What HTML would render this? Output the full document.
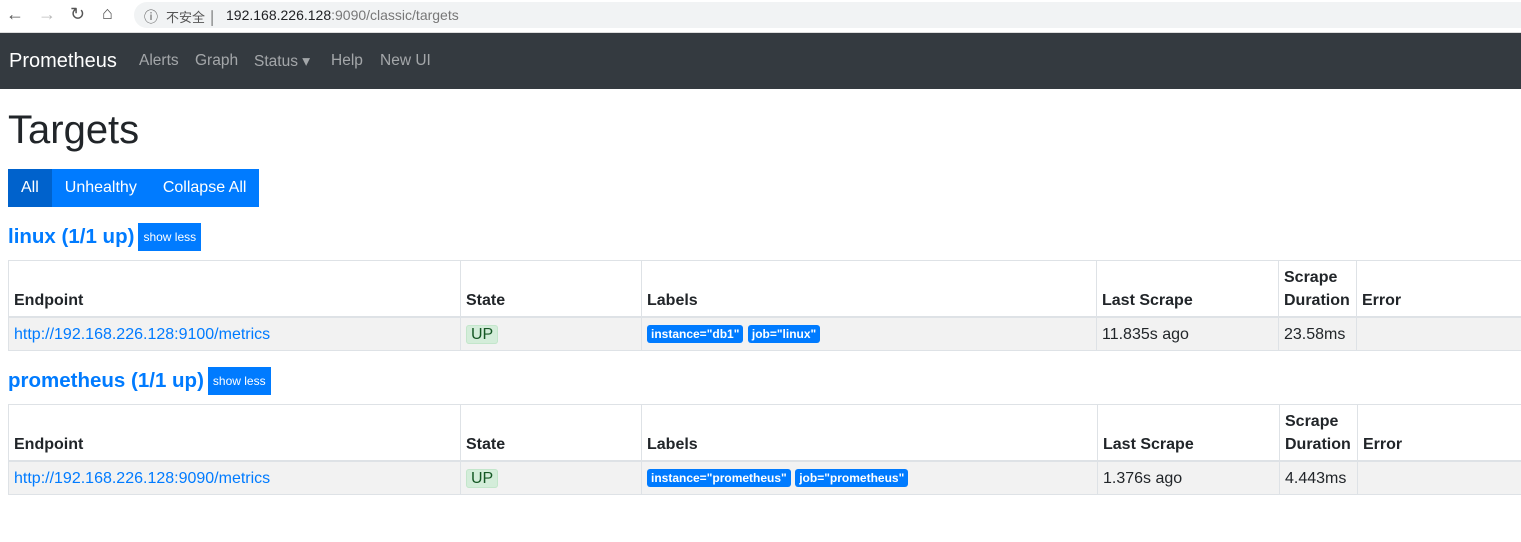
<!DOCTYPE html><html><head><meta charset="utf-8"><style>
body{margin:0;width:1521px;height:542px;overflow:hidden;background:#fff;font-family:"Liberation Sans","Noto Sans CJK SC",sans-serif;color:#212529}
.chrome{height:32px;background:#fff;border-bottom:1px solid #ddd;position:relative}
.url{position:absolute;left:134px;top:2px;width:1400px;height:26px;background:#f1f3f4;border-radius:14px}
.url span{position:absolute;top:5px;font-size:14px}
nav{position:absolute;top:33px;left:0;width:1521px;height:56px;background:#343a40}
nav .b{position:absolute;left:9px;top:17px;color:#fff;font-size:20px}
nav a{position:absolute;top:19px;color:rgba(255,255,255,.55);font-size:15.5px}
h1{position:absolute;left:8px;top:108px;margin:0;font-size:40px;font-weight:500}
.btns{position:absolute;left:8px;top:169px;height:38px;display:flex}
.btns div{background:#007bff;color:#fff;font-size:16px;line-height:38px;padding:0 13px}
.btns div.a{background:#0062cc}
h2{position:absolute;left:8px;margin:0;font-size:20.5px;font-weight:bold;color:#007bff;line-height:28px}
h2 span{display:inline-block;background:#007bff;color:#fff;font-size:12px;font-weight:normal;padding:0 5px;line-height:28px;vertical-align:top;margin-left:4px}
table{position:absolute;left:8px;width:1530px;border-collapse:collapse;font-size:16px;line-height:23px}
td,th{border:1px solid #dee2e6;padding:0 5px;text-align:left;vertical-align:bottom}
th{height:51px;padding-bottom:4px;border-bottom:2px solid #dee2e6}
tr.d td{background:#f2f2f2;height:32px;vertical-align:middle}
.l{color:#007bff}
.up{background:#d4edda;color:#155724;border:1px solid #c3e6cb;padding:0 4px;border-radius:3px}
.lb{background:#007bff;color:#fff;font-size:12px;font-weight:bold;padding:2px 4px;border-radius:3px;margin-right:0}
</style></head><body>
<div class="chrome"><span style="position:absolute;left:6px;top:4px;font-size:18px;color:#555">←</span><span style="position:absolute;left:38px;top:4px;font-size:18px;color:#bbb">→</span><span style="position:absolute;left:70px;top:4px;font-size:18px;color:#555">↻</span><span style="position:absolute;left:102px;top:3px;font-size:18px;color:#555">⌂</span>
<div class="url"><span style="left:10px;color:#555">ⓘ</span><span style="left:32px;color:#555;font-size:13px">不安全 │</span><span style="left:92px;color:#202124">192.168.226.128<span style="position:static;color:#777">:9090/classic/targets</span></span></div></div>
<nav><span class="b">Prometheus</span><a style="left:139px">Alerts</a><a style="left:195px">Graph</a><a style="left:254px">Status ▾</a><a style="left:331px">Help</a><a style="left:380px">New UI</a></nav>
<h1>Targets</h1>
<div class="btns"><div class="a">All</div><div>Unhealthy</div><div>Collapse All</div></div>
<h2 style="top:223px">linux (1/1 up)<span>show less</span></h2>
<table style="top:260px"><tr><th style="width:441px">Endpoint</th><th style="width:170px">State</th><th style="width:444px">Labels</th><th style="width:171px">Last Scrape</th><th style="width:67px">Scrape Duration</th><th>Error</th></tr>
<tr class="d"><td class="l">http://192.168.226.128:9100/metrics</td><td><span class="up">UP</span></td><td><span class="lb">instance="db1"</span> <span class="lb">job="linux"</span></td><td>11.835s ago</td><td>23.58ms</td><td></td></tr></table>
<h2 style="top:367px">prometheus (1/1 up)<span>show less</span></h2>
<table style="top:404px"><tr><th style="width:441px">Endpoint</th><th style="width:170px">State</th><th style="width:445px">Labels</th><th style="width:171px">Last Scrape</th><th style="width:67px">Scrape Duration</th><th>Error</th></tr>
<tr class="d"><td class="l">http://192.168.226.128:9090/metrics</td><td><span class="up">UP</span></td><td><span class="lb">instance="prometheus"</span> <span class="lb">job="prometheus"</span></td><td>1.376s ago</td><td>4.443ms</td><td></td></tr></table>
</body></html>
